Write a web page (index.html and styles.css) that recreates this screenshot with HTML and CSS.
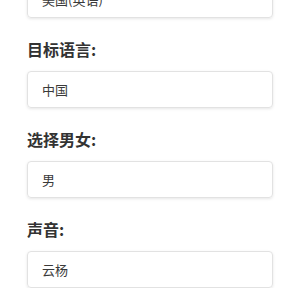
FILE: index.html
```html
<!DOCTYPE html>
<html lang="zh">
<head>
<meta charset="utf-8">
<link rel="stylesheet" href="styles.css">
</head>
<body>
<div class="form">
  <div class="field first">
    <div class="box">美国(英语)</div>
  </div>
  <div class="field">
    <div class="label">目标语言:</div>
    <div class="box">中国</div>
  </div>
  <div class="field">
    <div class="label">选择男女:</div>
    <div class="box">男</div>
  </div>
  <div class="field">
    <div class="label">声音:</div>
    <div class="box">云杨</div>
  </div>
</div>
</body>
</html>
```
FILE: styles.css
```css
html, body {
  margin: 0;
  padding: 0;
  background: #fff;
  overflow: hidden;
}
body {
  font-family: "Noto Sans CJK SC", "Noto Sans", sans-serif;
  color: #333;
}
.form {
  margin-top: -19px;
  padding: 0 27px;
  display: flex;
  flex-direction: column;
  gap: 21px;
}
.field {
  display: flex;
  flex-direction: column;
  gap: 12px;
}
.label {
  font-size: 16px;
  font-weight: bold;
  line-height: 20px;
  color: #333;
}
.box {
  height: 35px;
  box-sizing: content-box;
  border: 1px solid #e2e2e2;
  border-radius: 4px;
  box-shadow: 0 1px 3px rgba(0, 0, 0, 0.1);
  padding: 0 14px;
  font-size: 13px;
  line-height: 35px;
  color: #3a3a3a;
}
```
